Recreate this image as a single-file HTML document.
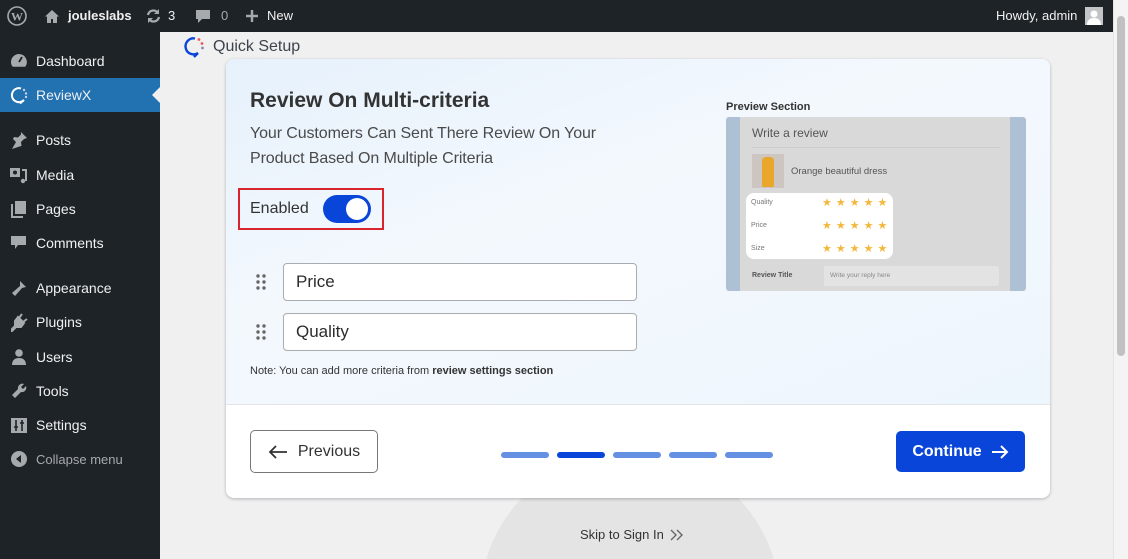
<!DOCTYPE html>
<html style="width:1128px;height:559px;overflow:hidden;background:#f0f0f1"><head><meta charset="utf-8"><style>
*{box-sizing:border-box;margin:0;padding:0}
body{width:1128px;height:559px;overflow:hidden;background:#f0f0f1;font-family:"Liberation Sans",sans-serif;position:relative}
#bar{position:absolute;left:0;top:0;width:1113px;height:32px;background:#1d2327;color:#f0f0f1;font-size:13px}
#bar .it{position:absolute;top:0;height:32px;line-height:32px;display:flex;align-items:center;gap:6px}
#side{position:absolute;left:0;top:32px;width:160px;height:527px;background:#1d2327}
.mi{position:absolute;left:0;width:160px;height:34px;display:flex;align-items:center;color:#f0f0f1;font-size:14px}
.mi svg{position:absolute;left:9px}
.mi span{position:absolute;left:36px}
#scroll{position:absolute;right:0;top:0;width:15px;height:559px;background:#f4f4f4;border-left:1px solid #e4e4e4}
#scroll div{position:absolute;left:3px;top:16px;width:8px;height:340px;background:#c1c1c1;border-radius:4px}
#card{position:absolute;left:226px;top:59px;width:824px;height:439px;background:#fff;border-radius:8px;box-shadow:0 1px 3px rgba(0,0,0,.25);overflow:hidden}
#top{position:absolute;left:0;top:0;width:824px;height:346px;background:linear-gradient(160deg,#e6f1fc 0%,#f3f8fd 40%,#eef6fd 100%);border-bottom:1px solid #e2e4e7}
.inp{position:absolute;left:57px;width:354px;height:38px;border:1px solid #a9acb0;border-radius:4px;background:#fff;font-size:17px;color:#2c2c2c;padding-left:12px;line-height:36px}
.grip{position:absolute;left:29px;width:12px;height:16px}
.dash{position:absolute;top:393px;width:48px;height:6px;border-radius:3px;background:#6690e4}
.star{color:#f5b73b;font-size:11px;letter-spacing:4px}
</style></head><body>
<div style="position:absolute;left:160px;top:32px;width:953px;height:527px;overflow:hidden"><div style="position:absolute;left:320px;top:420px;width:300px;height:300px;border-radius:50%;background:#e4e4e4"></div></div>
<div id="bar">
 <div class="it" style="left:7px"><svg width="20" height="20" viewBox="0 0 20 20"><circle cx="10" cy="10" r="9" fill="none" stroke="#a7aaad" stroke-width="1.6"/><text x="10" y="14.5" font-size="12" font-weight="bold" text-anchor="middle" fill="#a7aaad" font-family="Liberation Serif">W</text></svg></div>
 <div class="it" style="left:44px"><svg width="16" height="15" viewBox="0 0 16 15"><path d="M8 1L1 7.5h2V14h4v-4h2v4h4V7.5h2z" fill="#a7aaad"/></svg><span style="font-weight:bold;margin-left:2px">jouleslabs</span></div>
 <div class="it" style="left:145px"><svg width="17" height="16" viewBox="0 0 17 16"><path d="M3 7a5.5 5.5 0 0 1 10-2M14 9a5.5 5.5 0 0 1-10 2" fill="none" stroke="#a7aaad" stroke-width="2.2"/><path d="M14 1v5h-5zM3 15v-5h5z" fill="#a7aaad"/></svg><span>3</span></div>
 <div class="it" style="left:195px"><svg width="16" height="16" viewBox="0 0 16 16"><path d="M1 2h14v9H7l-4 4v-4H1z" fill="#a7aaad"/></svg><span style="color:#a7aaad;margin-left:4px">0</span></div>
 <div class="it" style="left:245px"><svg width="14" height="14" viewBox="0 0 14 14"><path d="M7 1v12M1 7h12" stroke="#a7aaad" stroke-width="2.4"/></svg><span style="margin-left:2px">New</span></div>
 <div class="it" style="left:996px">Howdy, admin <span style="display:inline-block;width:18px;height:18px;background:#c3c4c7;margin-left:2px;position:relative"><svg width="18" height="18" viewBox="0 0 18 18" style="position:absolute;left:0;top:0"><circle cx="9" cy="7" r="3.5" fill="#fff"/><path d="M2 18c0-5 3-7 7-7s7 2 7 7z" fill="#fff"/></svg></span></div>
</div>
<div id="side">
 <div class="mi" style="top:12px"><svg width="20" height="20" viewBox="0 0 20 20"><path d="M10 3a8 8 0 0 0-8 8c0 2 .7 3.6 1.8 4.8h12.4A8 8 0 0 0 10 3z" fill="#a7aaad"/><path d="M10 11l3-5" stroke="#1d2327" stroke-width="1.8"/></svg><span>Dashboard</span></div>
 <div class="mi" style="top:46px;background:#2271b1"><svg width="20" height="20" viewBox="0 0 20 20"><path d="M12 3.5A7 7 0 1 0 15 15l-4 3.5" fill="none" stroke="#fff" stroke-width="2"/><circle cx="15" cy="5" r="1.2" fill="#cce"/><circle cx="17" cy="8.5" r="1.2" fill="#cce"/><circle cx="17" cy="12" r="1.2" fill="#cce"/></svg><span>ReviewX</span><div style="position:absolute;right:0;top:9px;width:0;height:0;border:8px solid transparent;border-right-color:#f0f0f1"></div></div>
 <div class="mi" style="top:91px"><svg width="20" height="20" viewBox="0 0 20 20"><path d="M12 2l6 6-3 1-3 3 .5 4-2 .5L3 19l4-7-3-3 1-2 4 .5 3-3z" fill="#a7aaad"/></svg><span>Posts</span></div>
 <div class="mi" style="top:126px"><svg width="20" height="20" viewBox="0 0 20 20"><rect x="1" y="3" width="10" height="9" fill="#a7aaad"/><circle cx="6" cy="7.5" r="2" fill="#1d2327"/><path d="M13 5h4v11" stroke="#a7aaad" stroke-width="2" fill="none"/><circle cx="14" cy="16" r="2.2" fill="#a7aaad"/></svg><span>Media</span></div>
 <div class="mi" style="top:160px"><svg width="20" height="20" viewBox="0 0 20 20"><rect x="6" y="2" width="11" height="13" fill="#a7aaad"/><path d="M3 5v13h11" stroke="#a7aaad" stroke-width="2" fill="none"/></svg><span>Pages</span></div>
 <div class="mi" style="top:194px"><svg width="20" height="20" viewBox="0 0 20 20"><path d="M2 3h15v9h-8l-3 4v-4H2z" fill="#a7aaad"/></svg><span>Comments</span></div>
 <div class="mi" style="top:239px"><svg width="20" height="20" viewBox="0 0 20 20"><path d="M11 3l6 6-4 1-7 8-3-3 8-7z" fill="#a7aaad"/></svg><span>Appearance</span></div>
 <div class="mi" style="top:273px"><svg width="20" height="20" viewBox="0 0 20 20"><path d="M13 2l-3 4M18 7l-4 3M9 5l6 6-3 4-5 0-4 4 0-2 3-3 0-5z" stroke="#a7aaad" stroke-width="2" fill="#a7aaad"/></svg><span>Plugins</span></div>
 <div class="mi" style="top:308px"><svg width="20" height="20" viewBox="0 0 20 20"><circle cx="10" cy="6" r="3.8" fill="#a7aaad"/><path d="M3 18c0-5 3-7 7-7s7 2 7 7z" fill="#a7aaad"/></svg><span>Users</span></div>
 <div class="mi" style="top:342px"><svg width="20" height="20" viewBox="0 0 20 20"><path d="M17 5l-3 3-2-2 3-3a4.5 4.5 0 0 0-6 5L3 14l3 3 6-6a4.5 4.5 0 0 0 5-6z" fill="#a7aaad"/></svg><span>Tools</span></div>
 <div class="mi" style="top:376px"><svg width="20" height="20" viewBox="0 0 20 20"><rect x="2" y="3" width="16" height="15" fill="#a7aaad"/><path d="M7 5v11M13 5v11M5 12h4M11 8h4" stroke="#1d2327" stroke-width="1.6"/></svg><span>Settings</span></div>
 <div class="mi" style="top:410px;color:#a7aaad;font-size:13px"><svg width="20" height="20" viewBox="0 0 20 20"><circle cx="10" cy="10" r="8" fill="#a7aaad"/><path d="M12 6v8l-5-4z" fill="#1d2327"/></svg><span>Collapse menu</span></div>
</div>
<div id="scroll"><div></div></div>
<div style="position:absolute;left:183px;top:35px;display:flex;align-items:center;gap:8px;font-size:16px;color:#3c434a">
 <svg width="22" height="24" viewBox="0 0 22 24"><path d="M12 3.5A8 8 0 1 0 15 18l-4 4" fill="none" stroke="#0a45d9" stroke-width="2.4"/><circle cx="16" cy="4.5" r="1.4" fill="#e55"/><circle cx="19" cy="8.5" r="1.4" fill="#e55"/><circle cx="19.5" cy="13" r="1.4" fill="#88a"/></svg>Quick Setup</div>
<div id="card">
 <div id="top">
  <div style="position:absolute;left:24px;top:30px;font-size:21px;font-weight:bold;color:#333">Review On Multi-criteria</div>
  <div style="position:absolute;left:24px;top:63px;font-size:16px;line-height:24.5px;color:#4a4a4a;width:400px;letter-spacing:-0.1px">Your Customers Can Sent There Review On Your Product Based On Multiple Criteria</div>
  <div style="position:absolute;left:12px;top:129px;width:146px;height:42px;border:2px solid #d9232d"></div>
  <div style="position:absolute;left:24px;top:141px;font-size:16px;color:#333">Enabled</div>
  <div style="position:absolute;left:97px;top:136px;width:48px;height:28px;border-radius:14px;background:#0a45d9"><div style="position:absolute;right:3px;top:3px;width:22px;height:22px;border-radius:50%;background:#fff"></div></div>
  <svg class="grip" style="top:215px" viewBox="0 0 12 16"><g fill="#666"><circle cx="3" cy="2" r="1.7"/><circle cx="9" cy="2" r="1.7"/><circle cx="3" cy="8" r="1.7"/><circle cx="9" cy="8" r="1.7"/><circle cx="3" cy="14" r="1.7"/><circle cx="9" cy="14" r="1.7"/></g></svg>
  <div class="inp" style="top:204px">Price</div>
  <svg class="grip" style="top:265px" viewBox="0 0 12 16"><g fill="#666"><circle cx="3" cy="2" r="1.7"/><circle cx="9" cy="2" r="1.7"/><circle cx="3" cy="8" r="1.7"/><circle cx="9" cy="8" r="1.7"/><circle cx="3" cy="14" r="1.7"/><circle cx="9" cy="14" r="1.7"/></g></svg>
  <div class="inp" style="top:254px">Quality</div>
  <div style="position:absolute;left:24px;top:306px;font-size:11px;color:#333">Note: You can add more criteria from <b>review settings section</b></div>
  <div style="position:absolute;left:500px;top:42px;font-size:11px;font-weight:bold;color:#333">Preview Section</div>
  <div style="position:absolute;left:500px;top:58px;width:300px;height:174px;background:#aec0d4;border-radius:3px">
   <div style="position:absolute;left:14px;top:0;width:270px;height:174px;background:#d9d9d9">
    <div style="position:absolute;left:12px;top:9px;font-size:12px;color:#555">Write a review</div>
    <div style="position:absolute;left:12px;top:30px;width:248px;height:1px;background:#ccc"></div>
    <div style="position:absolute;left:12px;top:37px;width:32px;height:34px;background:#cdc6c0"><div style="position:absolute;left:10px;top:3px;width:12px;height:30px;background:#e8a72b;border-radius:4px 4px 1px 1px"></div></div>
    <div style="position:absolute;left:51px;top:49px;font-size:9.5px;color:#555">Orange beautiful dress</div>
    <div style="position:absolute;left:6px;top:76px;width:147px;height:66px;background:#fff;border-radius:8px;font-size:7px;color:#777">
     <div style="position:absolute;left:5px;top:6px">Quality</div><div class="star" style="position:absolute;left:76px;top:3px">★★★★★</div>
     <div style="position:absolute;left:5px;top:29px">Price</div><div class="star" style="position:absolute;left:76px;top:26px">★★★★★</div>
     <div style="position:absolute;left:5px;top:52px">Size</div><div class="star" style="position:absolute;left:76px;top:49px">★★★★★</div>
    </div>
    <div style="position:absolute;left:12px;top:155px;font-size:7px;font-weight:bold;color:#555">Review Title</div>
    <div style="position:absolute;left:84px;top:149px;width:175px;height:20px;background:#e3e3e3;border-radius:2px;font-size:6.5px;color:#888;padding:6px 6px">Write your reply here</div>
   </div>
  </div>
 </div>
 <div style="position:absolute;left:24px;top:371px;width:128px;height:43px;border:1px solid #777;border-radius:5px;display:flex;align-items:center;justify-content:center;gap:10px;font-size:16px;color:#333"><svg width="20" height="14" viewBox="0 0 20 14"><path d="M19 7H2M8 1L2 7l6 6" fill="none" stroke="#333" stroke-width="1.8"/></svg>Previous</div>
 <div class="dash" style="left:275px"></div><div class="dash" style="left:331px;background:#0a45d9"></div><div class="dash" style="left:387px"></div><div class="dash" style="left:443px"></div><div class="dash" style="left:499px"></div>
 <div style="position:absolute;left:670px;top:372px;width:129px;height:41px;background:#0a45d9;border-radius:5px;display:flex;align-items:center;justify-content:center;gap:9px;font-size:16px;font-weight:bold;color:#fff">Continue<svg width="18" height="14" viewBox="0 0 18 14"><path d="M1 7h15M10 1l6 6-6 6" fill="none" stroke="#fff" stroke-width="2"/></svg></div>
</div>
<div style="position:absolute;left:580px;top:527px;font-size:13px;color:#333;display:flex;align-items:center;gap:6px">Skip to Sign In <svg width="14" height="12" viewBox="0 0 14 12"><path d="M1 1l5 5-5 5M7 1l5 5-5 5" fill="none" stroke="#666" stroke-width="1.4"/></svg></div>
</body></html>
